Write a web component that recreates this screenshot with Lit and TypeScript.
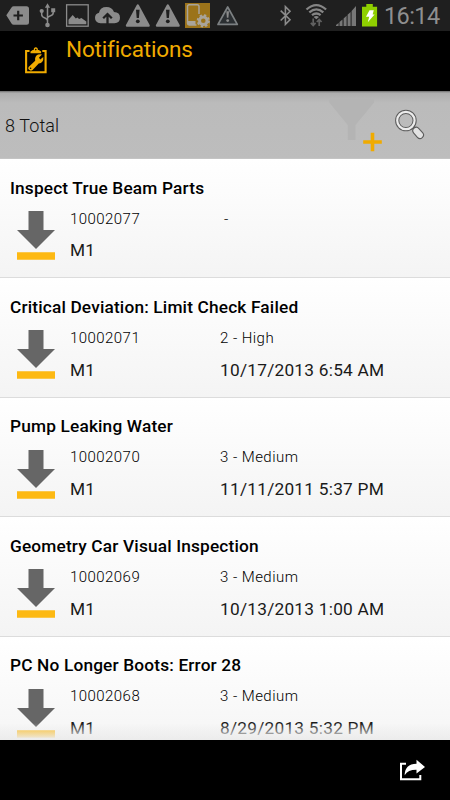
import { LitElement, html, css, svg } from "lit";
import { customElement, property } from "lit/decorators.js";

interface Notice {
  title: string;
  id: string;
  priority: string;
  plant: string;
  date: string;
}

const NOTICES: Notice[] = [
  { title: "Inspect True Beam Parts", id: "10002077", priority: "-", plant: "M1", date: "" },
  { title: "Critical Deviation: Limit Check Failed", id: "10002071", priority: "2 - High", plant: "M1", date: "10/17/2013 6:54 AM" },
  { title: "Pump Leaking Water", id: "10002070", priority: "3 - Medium", plant: "M1", date: "11/11/2011 5:37 PM" },
  { title: "Geometry Car Visual Inspection", id: "10002069", priority: "3 - Medium", plant: "M1", date: "10/13/2013 1:00 AM" },
  { title: "PC No Longer Boots: Error 28", id: "10002068", priority: "3 - Medium", plant: "M1", date: "8/29/2013 5:32 PM" },
];

// Solid warning triangle, drawn in a 26x31 box.
const warning = svg`
  <path d="M12.8 5.6 L23.6 25.6 H2 Z" fill="#8b8b8b" stroke="#8b8b8b" stroke-width="2.4" stroke-linejoin="round"/>
  <path d="M11 9.8h3.6l-.7 8.2h-2.2z" fill="#1f1f1f"/><circle cx="12.8" cy="21.3" r="1.9" fill="#1f1f1f"/>`;

@customElement("status-bar")
export class StatusBar extends LitElement {
  static styles = css`
    :host { display: flex; height: 31px; background: #1f1f1f; padding-left: 6px; box-sizing: border-box; }
    svg { display: block; flex: none; }
    .g3 { margin-left: 3px; }
    .g4 { margin-left: 4px; }
    .g5 { margin-left: 5px; }
    .g8 { margin-left: 8px; }
    .g12 { margin-left: 12px; }
    .gap { margin-left: 39px; }
    .clock { margin-left: 5px; font: 400 23.5px/32px Roboto, sans-serif; color: #8f8f8f; letter-spacing: -0.6px; white-space: nowrap; }
  `;
  render() {
    return html`
      <svg width="24" height="31" viewBox="6 0 24 31">
        <path d="M6.3 15.3 L11.5 7.5 Q12.3 6.2 13.8 6.2 H26.5 Q29 6.2 29 8.7 V22.3 Q29 24.8 26.5 24.8 H13.8 Q12.3 24.8 11.5 23.4Z" fill="#8b8b8b"/>
        <path d="M18.2 10.8v9.4M13.5 15.5h9.4" stroke="#1f1f1f" stroke-width="2.2"/>
      </svg>
      <svg class="g8" width="19" height="31" viewBox="38 0 19 31">
        <path d="M47.5 6v19M47.5 20.8 Q47.5 19 45 18 Q41.7 17 41.7 14.8 V12M47.5 18.2 Q47.5 17 50 16 Q53.2 15 53.2 13V11" fill="none" stroke="#8b8b8b" stroke-width="1.5"/>
        <path d="M47.5 3.2l2.6 4.6h-5.2zM51.2 8.2h4v4h-4z" fill="#8b8b8b"/>
        <circle cx="41.7" cy="11" r="2.1" fill="#8b8b8b"/><circle cx="47.5" cy="25" r="2.3" fill="#8b8b8b"/>
      </svg>
      <svg class="g8" width="25" height="31" viewBox="65 0 25 31">
        <rect x="66.6" y="4.8" width="21.6" height="21.4" fill="none" stroke="#8b8b8b" stroke-width="1.3"/>
        <path d="M68.5 24.2v-4.5l4.2-4.7 3.1 3.5 1.6-1 1.7 1.6 2.3-1.2 4.9 3.6v2.7z" fill="#8b8b8b"/>
      </svg>
      <svg class="g4" width="27" height="31" viewBox="94 0 27 31">
        <path d="M100.5 23.2 Q95 22.8 95 17.8 Q95 13.6 99 12.7 Q100 7 106.5 7 Q112 7 114 12 Q120 12.2 120 17.7 Q120 22.8 114.5 23.2Z" fill="#8b8b8b"/>
        <path d="M107.5 26v-11M103.2 18.2l4.3-4.2 4.3 4.2" fill="none" stroke="#1f1f1f" stroke-width="2.3"/>
      </svg>
      <svg class="g4" width="26" height="31" viewBox="0 0 26 31">${warning}</svg>
      <svg class="g4" width="26" height="31" viewBox="0 0 26 31">${warning}</svg>
      <svg class="g3" width="27" height="31" viewBox="184 0 27 31">
        <rect x="185" y="3" width="25" height="25" fill="#9b731a"/>
        <path d="M196.5 25h-7.3q-1.7 0-1.7-1.7V6.5q0-1.8 1.7-1.8h8q1.8 0 1.8 1.8V14" fill="none" stroke="#a9a49a" stroke-width="1.5"/>
        <path d="M188 21h7.5v4h-7.5z" fill="#a9a49a"/>
        <circle cx="203.3" cy="20.8" r="3.8" fill="none" stroke="#a9a49a" stroke-width="3"/>
        <circle cx="203.3" cy="20.8" r="5.6" fill="none" stroke="#a9a49a" stroke-width="2" stroke-dasharray="2.3 2.1"/>
      </svg>
      <svg class="g5" width="24" height="31" viewBox="216 0 24 31">
        <path d="M227.7 7 L237.3 24.4 H218Z" fill="#2b2f32" stroke="#7c8082" stroke-width="1.7" stroke-linejoin="round"/>
        <path d="M226.3 11.3h2.7l-.6 6.5h-1.5z" fill="#8b8b8b"/><circle cx="227.7" cy="20.6" r="1.4" fill="#8b8b8b"/>
      </svg>
      <svg class="gap" width="14" height="31" viewBox="279 0 14 31">
        <path d="M280.7 10.6l9.3 9.2-4.6 4.5V6.7l4.6 4.5-9.3 9.3" fill="none" stroke="#8b8b8b" stroke-width="1.6"/>
      </svg>
      <svg class="g12" width="23" height="31" viewBox="305 0 23 31">
        <g fill="none" stroke="#858585" stroke-width="2.3">
          <path d="M306.5 9.5q9.8-8.8 19.6 0M309.3 12.4q7-6 14 0M312 15.2q4.3-3.4 8.6 0"/>
        </g>
        <path d="M313.6 17q2.7-1.8 5.4 0l-2.7 2.3z" fill="#858585"/>
        <path d="M313.2 18.6v6.5M310.8 22.8l2.4 2.6 2.4-2.6M319.2 26v-6.3M316.8 22l2.4-2.6 2.4 2.6" fill="none" stroke="#606060" stroke-width="1.7"/>
      </svg>
      <svg class="g8" width="21" height="31" viewBox="336 0 21 31">
        <path d="M336 26v-1l2.6-2.1V26zM339.5 26v-4l3-2.6V26zM343.6 26v-7.6l3-2.6V26zM347.6 26V14.8l3-2.7V26zM351.6 26V11l4.4-5V26z" fill="#777"/>
      </svg>
      <svg class="g4" width="18" height="31" viewBox="361 0 18 31">
        <path d="M362 6.7h4.3V4h6.5v2.7h4.3v19.8H362z" fill="#8fcf00"/>
        <path d="M369.5 10.2h4.3l-1.2 4.3h2l-6.8 7.7 1.4-5.5h-3.2z" fill="#fff"/>
      </svg>
      <span class="clock">16:14</span>
    `;
  }
}

@customElement("notice-row")
export class NoticeRow extends LitElement {
  @property({ attribute: false }) notice!: Notice;
  static styles = css`
    :host { display: block; box-sizing: border-box; height: 119.4px; flex: none; padding: 17.6px 10px 0;
      background: linear-gradient(#ffffff, #f4f4f4); border-bottom: 1px solid #dcdcdc;
      font-family: Roboto, sans-serif; color: #000; }
    .title { font-weight: 500; font-size: 17.3px; line-height: 22px; letter-spacing: 0.16px; color: #000; white-space: nowrap; }
    .body { display: grid; grid-template-columns: 60px 150px 1fr; grid-template-rows: 32px 31.5px; margin-top: 4px; align-items: center; white-space: nowrap; }
    .icon { grid-row: 1 / 3; align-self: start; margin: 8.4px 0 0 7.3px; display: block; }
    .small { font-size: 15px; font-weight: 300; letter-spacing: 0.45px; }
    .big { font-size: 17.3px; font-weight: 400; letter-spacing: 0.23px; color: #1a1a1a; }
    .dash { padding-left: 4px; }
  `;
  render() {
    const n = this.notice;
    return html`
      <div class="title">${n.title}</div>
      <div class="body">
        <svg class="icon" width="38" height="50" viewBox="0 0 38 50">
          <path d="M11.5 0h15v19H38L19 38 0 19h11.5z" fill="#666"/>
          <path d="M0 41.3h38v7.5H0z" fill="#fdb913"/>
        </svg>
        <span class="small">${n.id}</span>
        <span class="small ${n.priority === "-" ? "dash" : ""}">${n.priority}</span>
        <span class="big">${n.plant}</span>
        <span class="big">${n.date}</span>
      </div>
    `;
  }
}

@customElement("app-root")
export class AppRoot extends LitElement {
  static styles = css`
    :host { display: flex; flex-direction: column; width: 450px; height: 800px; overflow: hidden; background: #000; font-family: Roboto, sans-serif; }
    status-bar { flex: none; }
    svg { display: block; flex: none; }
    .header { display: flex; height: 60px; flex: none; background: #000; padding-left: 24px; }
    .header svg { margin-top: 16px; }
    .heading { margin-left: 19px; margin-top: 4px; font-size: 22.5px; line-height: 28px; letter-spacing: -0.15px; color: #f0ab00; }
    .toolbar { display: flex; box-sizing: border-box; height: 68px; flex: none; background: linear-gradient(#6c6c6c 0, #adadad 2px, #bbbbbb 12px, #bdbdbd 100%); padding: 0 25px 0 5px; border-bottom: 1px solid #c4c4c4; }
    .total { flex: 1; font-size: 18px; font-weight: 300; line-height: 69px; color: #111; letter-spacing: 0.1px; }
    .search { margin-left: 12px; }
    .list { position: relative; display: flex; flex-direction: column; flex: 1; min-height: 0; overflow: hidden; background: #fff; }
    .fade { position: absolute; left: 0; right: 0; bottom: 0; height: 17px; background: linear-gradient(rgba(238, 238, 238, 0), #ececec); }
    .footer { display: flex; height: 60px; flex: none; justify-content: flex-end; padding-right: 25px; background: #000; }
  `;
  render() {
    return html`
      <status-bar></status-bar>
      <div class="header">
        <svg width="23" height="27" viewBox="24 47 23 27">
          <path d="M29.5 51H26.1V72.2H45.6V51h-3.3" fill="none" stroke="#f0ab00" stroke-width="2.1"/>
          <path d="M30.5 53.2v-1.8l2.2-1.3h1q0-2.8 2.1-2.8t2.1 2.8h1l2.2 1.3v1.8z" fill="#f0ab00"/>
          <circle cx="35.8" cy="49.6" r=".8" fill="#000"/>
          <path d="M28.6 66.9 35.2 60.8 Q34.4 56.5 38 54.6 Q40 53.8 42 54.4 L39 57.4 40.2 59.5 43.3 57 Q43.9 62.8 38.7 63.6 L32.6 69.9 Q30.7 71.4 29 69.8 Q27.5 68.2 28.6 66.9Z" fill="#f0ab00"/>
          <circle cx="30.6" cy="68.2" r=".8" fill="#000"/>
        </svg>
        <div class="heading">Notifications</div>
      </div>
      <div class="toolbar">
        <div class="total">8 Total</div>
        <svg width="54" height="67" viewBox="329 91 54 67">
          <path d="M329.3 99h44.7v3.5L355.5 125v15h-7.7v-15L329.3 102.5z" fill="#b4b4b4"/>
          <path d="M372.5 132.7v18.6M363.2 142h18.6" stroke="#f0ab00" stroke-width="3.6"/>
        </svg>
        <svg class="search" width="30" height="67" viewBox="394 91 30 67">
          <path d="M411.5 126.5l4 4.4" stroke="#666" stroke-width="3.6"/>
          <path d="M415.3 130.8l3.7 4.2" stroke="#5c5c5c" stroke-width="8" stroke-linecap="round"/>
          <path d="M415.3 130.8l3.7 4.2" stroke="#e2e2e2" stroke-width="5.8" stroke-linecap="round"/>
          <circle cx="404.9" cy="120.5" r="8.7" fill="none" stroke="#5c5c5c" stroke-width="4.2"/>
          <circle cx="404.9" cy="120.5" r="8.7" fill="none" stroke="#ececec" stroke-width="2.2"/>
        </svg>
      </div>
      <div class="list">
        ${NOTICES.map((n) => html`<notice-row .notice=${n}></notice-row>`)}
        <div class="fade"></div>
      </div>
      <div class="footer">
        <svg width="26" height="60" viewBox="399 740 26 60">
          <path d="M406 763.8H401V779.2H420.3V775" fill="none" stroke="#fff" stroke-width="2"/>
          <path d="M404.7 775.2 Q404.7 764 416.5 763.7 V759.7 L425 767 416.5 773.5V769.8 Q408 769.7 404.7 775.2Z" fill="#fff"/>
        </svg>
      </div>
    `;
  }
}
